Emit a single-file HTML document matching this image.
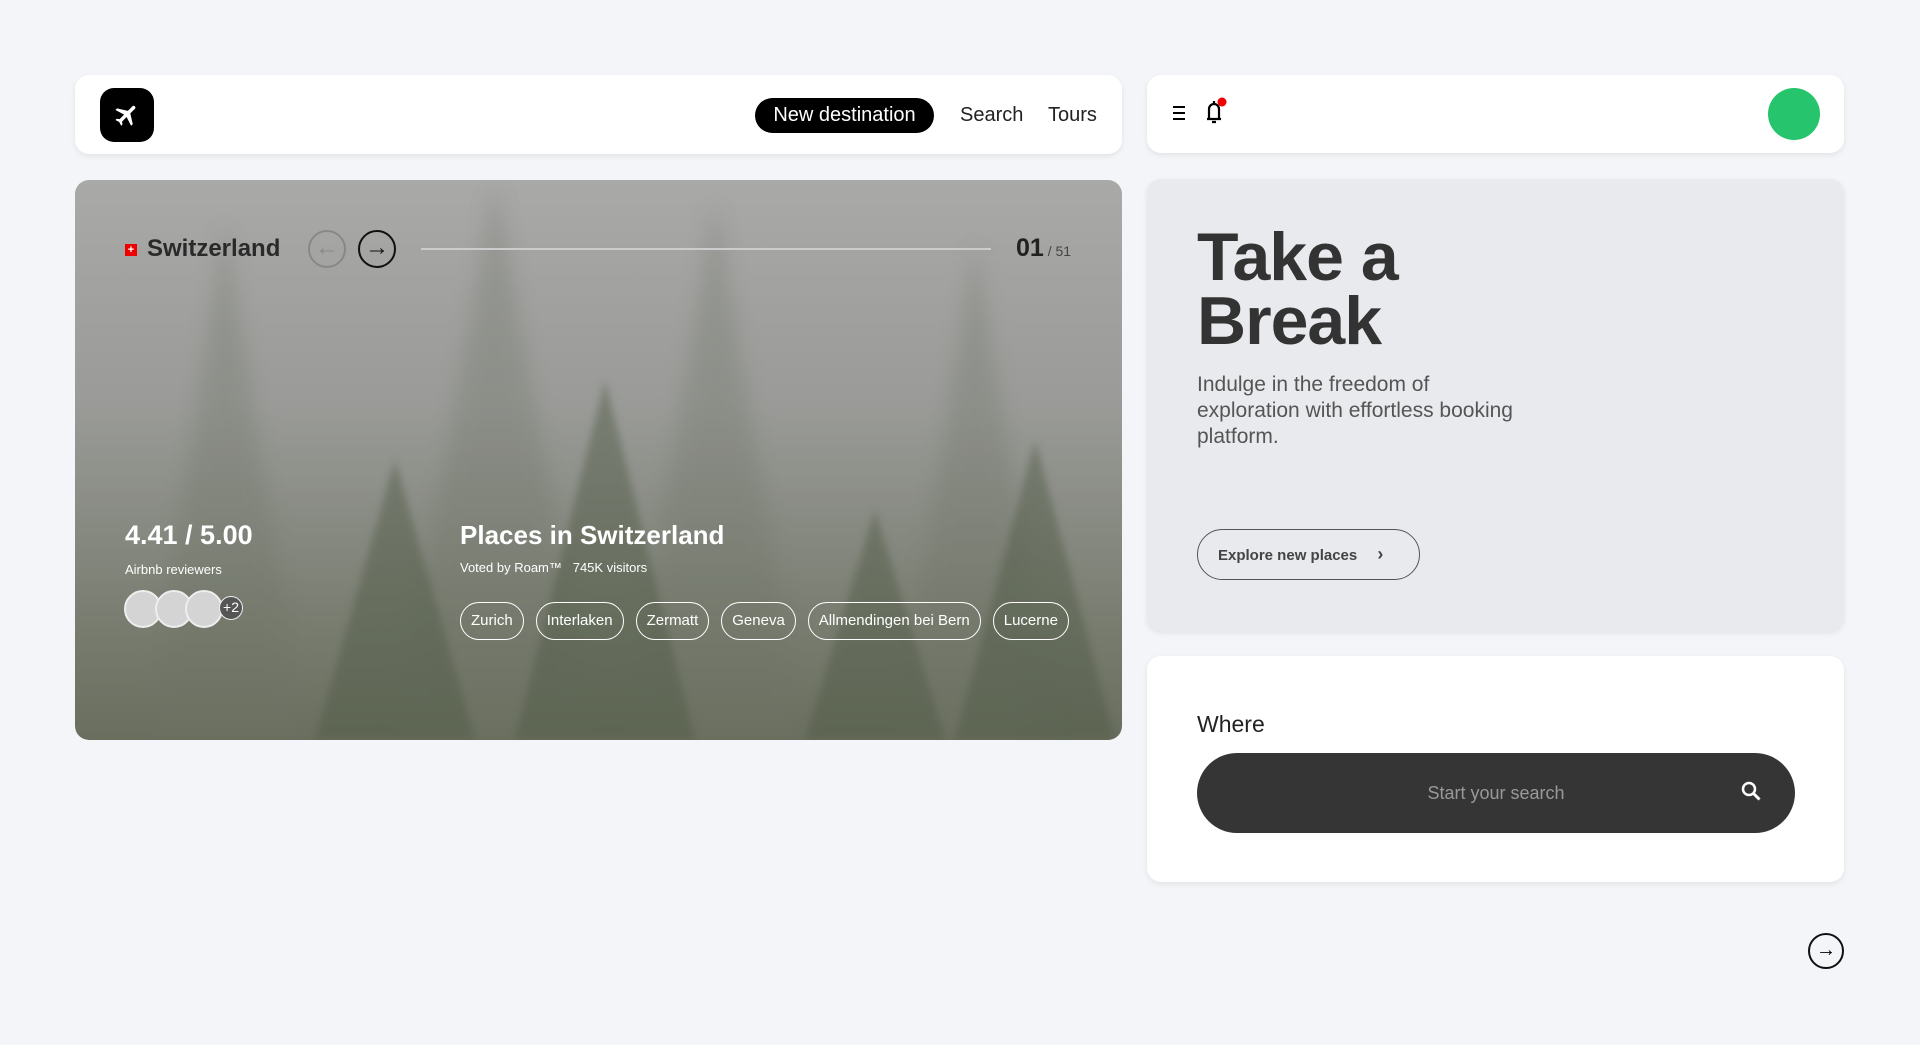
<!DOCTYPE html>
<html><head><meta charset="utf-8"><style>
*{box-sizing:border-box;margin:0;padding:0}
body{width:1920px;height:1045px;background:#f4f5f8;font-family:"Liberation Sans",sans-serif;position:relative;overflow:hidden}
.a{position:absolute}
.card{position:absolute;background:#fff;border-radius:14px;box-shadow:0 2px 6px rgba(0,0,0,.08)}
.tag{display:inline-block;height:38px;line-height:36px;border:1.5px solid #fff;border-radius:19px;padding:0 10px;color:#fff;font-size:15px;margin-right:12px}
.av{position:absolute;width:38px;height:38px;border-radius:50%;background:#d4d4d4;border:2px solid #eee}
</style></head><body>
<div class="card" style="left:75px;top:75px;width:1047px;height:79px">
  <div class="a" style="left:25px;top:13px;width:54px;height:54px;background:#000;border-radius:14px">
    <svg style="position:absolute;left:13px;top:13px" width="28" height="28" viewBox="0 0 24 24"><path transform="translate(12 12) rotate(45) translate(-12 -12)" fill="#fff" d="M21 16v-2l-8-5V3.5a1.5 1.5 0 0 0-3 0V9l-8 5v2l8-2.5V19l-2 1.5V22l3.5-1 3.5 1v-1.5L13 19v-5.5z" /></svg>
  </div>
  <div class="a" style="left:680px;top:23px;height:35px;width:179px;background:#000;color:#fff;border-radius:18px;font-size:20px;line-height:35px;text-align:center">New destination</div>
  <div class="a" style="left:885px;top:23px;line-height:35px;font-size:20px;color:#222">Search</div>
  <div class="a" style="left:973px;top:23px;line-height:35px;font-size:20px;color:#222">Tours</div>
</div>
<div class="card" style="left:1147px;top:75px;width:697px;height:78px">
  <div class="a" style="left:26px;top:31px;width:12px;height:14px;border-top:2px solid #000;border-bottom:2px solid #000"><div style="margin-top:4px;height:2px;background:#000"></div></div>
  <svg class="a" style="left:54px;top:22px" width="28" height="30" viewBox="0 0 28 30"><path d="M6 22h14M8 22V12a5 5 0 0 1 10 0v10M13 7V4M11 25h4" stroke="#000" stroke-width="2.2" fill="none"/><circle cx="21" cy="5" r="4.5" fill="#e00"/></svg>
  <div class="a" style="left:621px;top:13px;width:52px;height:52px;border-radius:50%;background:#26c46c"></div>
</div>
<div class="a" style="left:75px;top:180px;width:1047px;height:560px;border-radius:14px;overflow:hidden;background:linear-gradient(180deg,#a9a9a8 0%,#9a9b98 40%,#7c8074 75%,#6a6e5e 100%)">
  <svg class="a" style="left:0;top:0" width="1047" height="560">
    <defs><filter id="b"><feGaussianBlur stdDeviation="10"/></filter><filter id="c"><feGaussianBlur stdDeviation="4"/></filter></defs>
    <g fill="#6e7366" opacity=".3" filter="url(#b)"><polygon points="150,40 230,560 70,560"/><polygon points="420,0 520,560 320,560"/><polygon points="640,20 730,560 550,560"/><polygon points="900,60 980,560 820,560"/></g>
    <g fill="#4f5a45" opacity=".45" filter="url(#c)"><polygon points="530,200 620,560 440,560"/><polygon points="320,280 400,560 240,560"/><polygon points="960,260 1040,560 880,560"/><polygon points="800,330 870,560 730,560"/></g>
  </svg>
  <div class="a" style="left:50px;top:64px;width:12px;height:12px;background:#e00;color:#fff;font-size:11px;line-height:12px;text-align:center;font-weight:bold">+</div>
  <div class="a" style="left:72px;top:55px;font-size:24px;font-weight:bold;color:#2a2a2a">Switzerland</div>
  <div class="a" style="left:233px;top:50px;width:38px;height:38px;border-radius:50%;border:2px solid #888;color:#888;text-align:center;line-height:32px;font-size:24px">←</div>
  <div class="a" style="left:283px;top:50px;width:38px;height:38px;border-radius:50%;border:2px solid #111;color:#111;text-align:center;line-height:32px;font-size:24px">→</div>
  <div class="a" style="left:346px;top:68px;width:570px;height:2px;background:#ccc"></div>
  <div class="a" style="left:941px;top:54px;font-size:25px;font-weight:bold;color:#222">01<span style="font-size:14px;font-weight:normal;color:#444"> / 51</span></div>
  <div class="a" style="left:50px;top:340px;font-size:27px;font-weight:bold;color:#fff">4.41 / 5.00</div>
  <div class="a" style="left:50px;top:382px;font-size:13px;color:#fff">Airbnb reviewers</div>
  <div class="av" style="left:49px;top:410px"></div><div class="av" style="left:80px;top:410px"></div><div class="av" style="left:110px;top:410px"></div>
  <div class="a" style="left:144px;top:416px;width:24px;height:24px;border-radius:50%;background:#555;border:1.5px solid #eee;color:#fff;font-size:14px;line-height:21px;text-align:center">+2</div>
  <div class="a" style="left:385px;top:340px;font-size:26px;font-weight:bold;color:#fff">Places in Switzerland</div>
  <div class="a" style="left:385px;top:380px;font-size:13px;color:#fff">Voted by Roam™ &nbsp;&nbsp;745K visitors</div>
  <div class="a" style="left:385px;top:422px;white-space:nowrap"><span class="tag">Zurich</span><span class="tag">Interlaken</span><span class="tag">Zermatt</span><span class="tag">Geneva</span><span class="tag">Allmendingen bei Bern</span><span class="tag">Lucerne</span></div>
</div>
<div class="card" style="left:1147px;top:179px;width:697px;height:452px;background:#e8eaed">
  <div class="a" style="left:50px;top:46px;font-size:68px;font-weight:bold;color:#333;line-height:64px;letter-spacing:-1px">Take a<br>Break</div>
  <div class="a" style="left:50px;top:193px;font-size:21px;color:#555;line-height:26px;white-space:nowrap">Indulge in the freedom of<br>exploration with effortless booking<br>platform.</div>
  <div class="a" style="left:50px;top:350px;width:223px;height:51px;border:1.5px solid #555;border-radius:26px;font-size:15px;font-weight:bold;color:#444;line-height:48px;padding-left:20px">Explore new places <span style="margin-left:16px;font-size:18px">›</span></div>
</div>
<div class="card" style="left:1147px;top:656px;width:697px;height:226px">
  <div class="a" style="left:50px;top:55px;font-size:23px;color:#222">Where</div>
  <div class="a" style="left:50px;top:97px;width:598px;height:80px;background:#353535;border-radius:40px;color:#999;font-size:18px;line-height:80px;text-align:center">Start your search</div>
  <svg class="a" style="left:593px;top:124px" width="24" height="24" viewBox="0 0 24 24"><circle cx="9" cy="9" r="6" stroke="#fff" stroke-width="2.5" fill="none"/><path d="M13.5 13.5l6 6" stroke="#fff" stroke-width="3"/></svg>
</div>
<div class="a" style="left:1808px;top:933px;width:36px;height:36px;border-radius:50%;border:2px solid #111;text-align:center;line-height:30px;font-size:20px">→</div>
</body></html>
